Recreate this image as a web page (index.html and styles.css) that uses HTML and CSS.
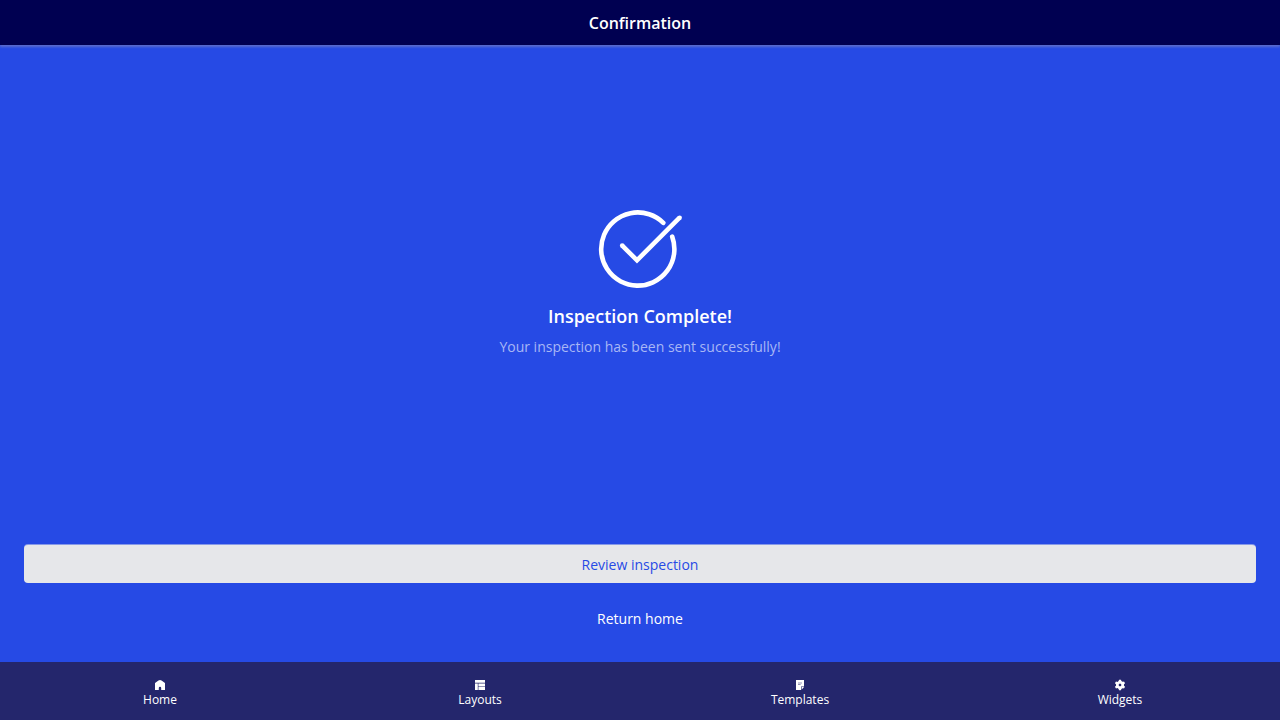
FILE: index.html
```html
<!DOCTYPE html>
<html lang="en">
<head>
<meta charset="utf-8">
<meta name="viewport" content="width=device-width, initial-scale=1">
<title>Confirmation</title>
<link rel="stylesheet" href="styles.css">
</head>
<body>
<header class="topbar"><h1 class="topbar-title">Confirmation</h1></header>
<main class="content">
  <section class="message">
    <svg class="check" viewBox="0 0 84 80" fill="none" stroke="#fff" stroke-width="4.6" aria-hidden="true">
      <path stroke-linecap="round" d="M65.3 13.8A36.6 36.6 0 1 0 74.2 27.6"/>
      <path d="M24 36.3L39 51.3L81.6 8.7"/>
      <circle cx="24.2" cy="36.5" r="2.3" fill="#fff" stroke="none"/>
      <circle cx="81.7" cy="8.7" r="2.2" fill="#fff" stroke="none"/>
    </svg>
    <h2 class="message-title">Inspection Complete!</h2>
    <p class="message-text">Your inspection has been sent successfully!</p>
  </section>
  <div class="actions">
    <button class="btn btn-filled" type="button">Review inspection</button>
    <button class="btn" type="button">Return home</button>
  </div>
</main>
<nav class="tabs" aria-label="Main">
  <a class="tab" href="#home">
    <svg class="tab-icon" viewBox="0 0 12 12" fill="#fff" aria-hidden="true"><path d="M1 4L4.5 1.4Q6 .4 7.5 1.4L11 4V11H7.2V9A1.2 1.2 0 0 0 4.8 9V11H1Z"/></svg>
    Home
  </a>
  <a class="tab" href="#layouts">
    <svg class="tab-icon" viewBox="0 0 12 12" fill="#fff" aria-hidden="true"><path d="M1 1H11V3.7H1ZM1 4.4H3.8V11H1ZM4.4 4.4H11V7.2H4.4ZM4.4 7.8H11V11H4.4Z"/></svg>
    Layouts
  </a>
  <a class="tab" href="#templates">
    <svg class="tab-icon" viewBox="0 0 12 12" aria-hidden="true"><path fill="#fff" d="M2 1H10V7.4H7V11H2ZM7.6 8H10L7.6 10.8Z"/><path stroke="#24266c" stroke-width=".5" d="M4 4H8M4 5.5H6.6"/></svg>
    Templates
  </a>
  <a class="tab" href="#widgets">
    <svg class="tab-icon" viewBox="0 0 12 12" aria-hidden="true"><circle cx="6" cy="6" r="2.6" fill="none" stroke="#fff" stroke-width="2.9"/><path fill="#fff" d="M5 .7H7L7.6 3H4.4ZM5 11.3H7L7.6 9H4.4ZM10 2.4L11.1 4.3L9 6L7.6 3.3ZM10 9.6L11.1 7.7L9 6L7.6 8.7ZM2 2.4L.9 4.3L3 6L4.4 3.3ZM2 9.6L.9 7.7L3 6L4.4 8.7Z"/><circle cx="6" cy="6" r="1.3" fill="#24266c"/></svg>
    Widgets
  </a>
</nav>
</body>
</html>
```
FILE: styles.css
```css
* {
  box-sizing: border-box;
}

body {
  margin: 0;
  min-height: 100vh;
  display: flex;
  flex-direction: column;
  background: #264ae5;
  color: #fff;
  font-family: "Open Sans", sans-serif;
  font-size: 14px;
  line-height: 20px;
}

.topbar {
  padding: 11px 16px 10px;
  background: #000051;
  text-align: center;
  box-shadow: 0 2px 2px rgba(140, 140, 180, 0.5);
}

.topbar-title {
  margin: 0;
  font-size: 16px;
  font-weight: 600;
  line-height: 24px;
}

.content {
  flex: 1;
  display: flex;
  flex-direction: column;
  padding: 24px;
}

.message {
  flex: 1;
  display: flex;
  flex-direction: column;
  align-items: center;
  justify-content: center;
  padding-bottom: 48px;
  text-align: center;
}

.check {
  width: 84px;
  height: 80px;
}

.message-title {
  margin: 16px 0 10px;
  font-size: 18px;
  font-weight: 600;
  line-height: 22px;
}

.message-text {
  margin: 0;
  color: #a8b7f5;
}

.actions {
  display: flex;
  flex-direction: column;
  gap: 17px;
}

.btn {
  padding: 9px 16px;
  border: 0;
  border-radius: 4px;
  background: transparent;
  color: #fff;
  font: inherit;
}

.btn-filled {
  padding: 10px 16px 8px;
  background: #e6e7ea;
  color: #264ae5;
  box-shadow: 0 -1px 0 rgba(230, 231, 234, 0.5);
}

.tabs {
  display: flex;
  background: #24266c;
}

.tab {
  flex: 1;
  display: flex;
  flex-direction: column;
  align-items: center;
  gap: 1px;
  padding: 17px 8px 12px;
  color: #fff;
  font-size: 12px;
  line-height: 16px;
  text-decoration: none;
}

.tab-icon {
  width: 12px;
  height: 12px;
}
```
